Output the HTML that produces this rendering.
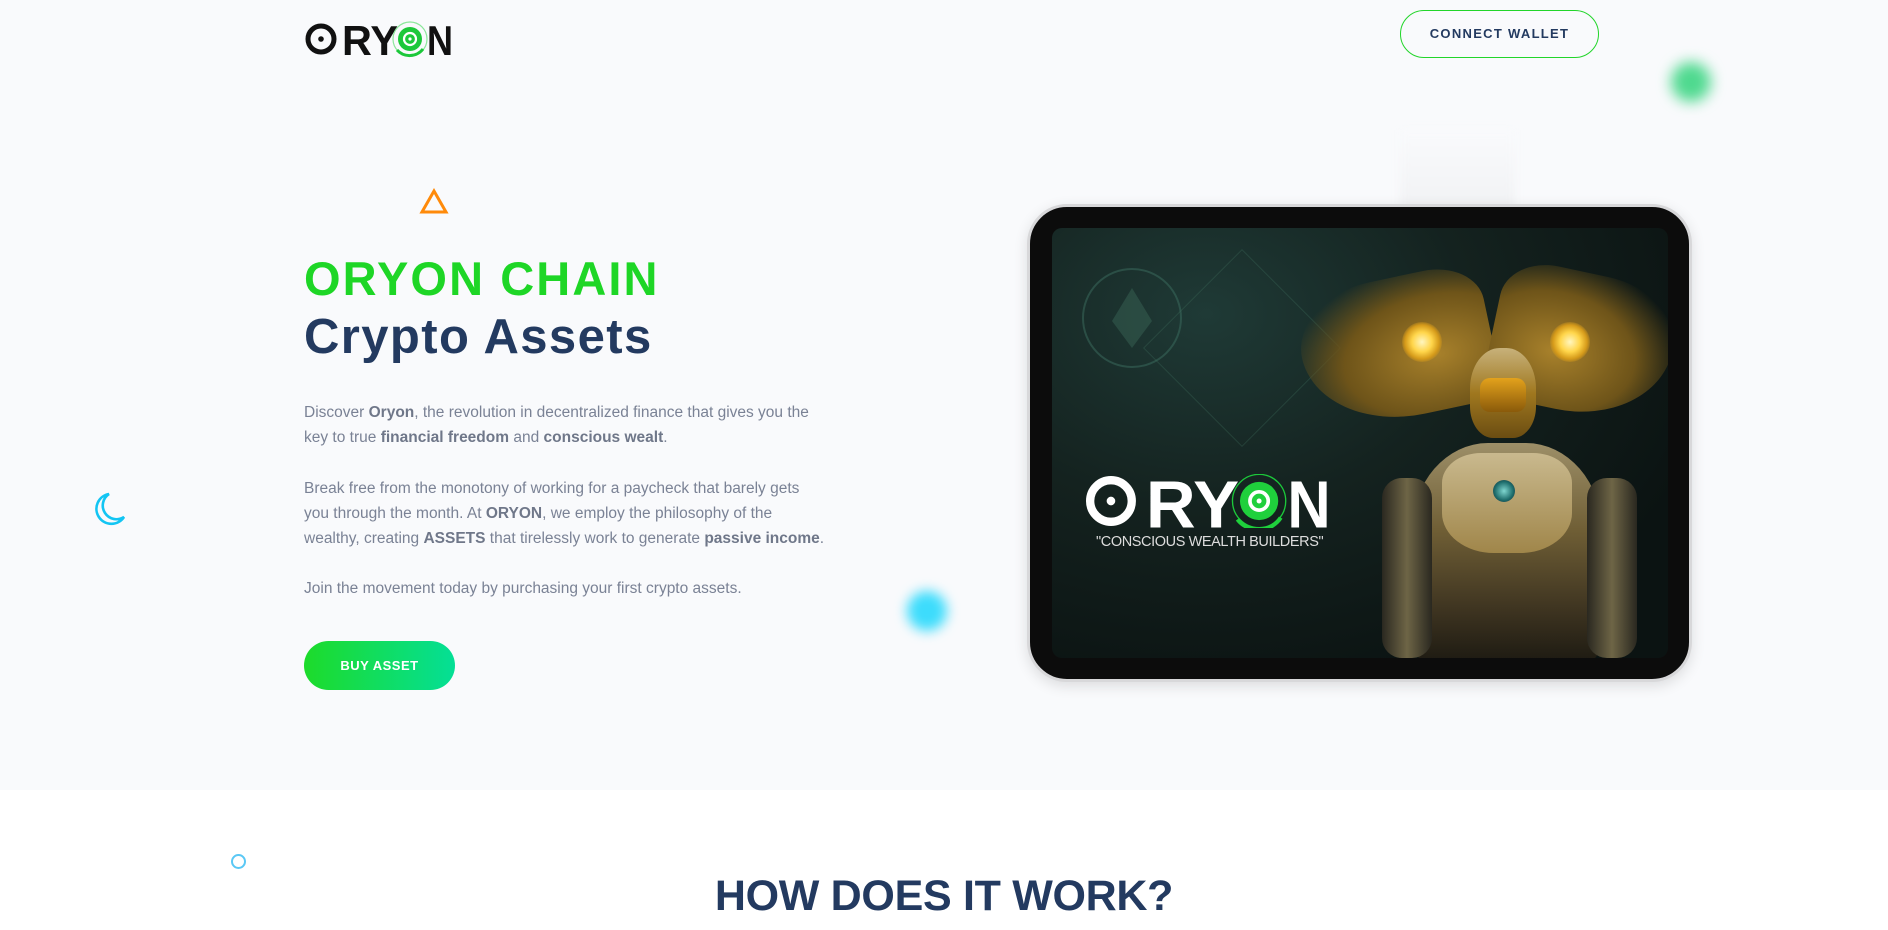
<!DOCTYPE html>
<html><head><meta charset="utf-8"><style>
*{margin:0;padding:0;box-sizing:border-box}
body{width:1888px;height:930px;overflow:hidden;background:#fff;font-family:"Liberation Sans",sans-serif;position:relative}
.hero{position:absolute;left:0;top:0;width:1888px;height:790px;background:#f9fafc}
.abs{position:absolute}
.btnw{left:1400px;top:10px;width:199px;height:48px;border:1.5px solid #22d52a;border-radius:24px;text-align:center;line-height:45px;font-size:13px;font-weight:700;letter-spacing:1.3px;color:#233a60}
h1{position:absolute;left:304px;top:250px;font-size:47px;line-height:58px;font-weight:700;color:#1ed626;white-space:nowrap;letter-spacing:2.1px}
h1 span{color:#233a60;font-size:49px;letter-spacing:1.4px}
.p{position:absolute;left:304px;font-size:15.5px;color:#7a8295;line-height:25px;white-space:nowrap}
.p b{color:#6f7789}
.buy{left:304px;top:641px;width:151px;height:49px;border-radius:25px;background:linear-gradient(90deg,#1ddb2a,#04df96);color:#fff;font-weight:700;font-size:13px;text-align:center;line-height:49px;letter-spacing:.5px}
h2{position:absolute;left:0;width:1888px;text-align:center;top:872px;font-size:43px;font-weight:700;color:#233a60;letter-spacing:-.3px}
</style></head><body>
<div class="hero"></div>

<svg class="abs" style="left:303px;top:19px" width="152" height="40" viewBox="-2 0 152 40">
<circle cx="16" cy="20" r="13" fill="none" stroke="#111" stroke-width="5"/><circle cx="16" cy="20" r="2.8" fill="#111"/>
<text x="37" y="36" font-family="Liberation Sans" font-weight="700" font-size="42" textLength="56" lengthAdjust="spacingAndGlyphs" fill="#111">RY</text>
<circle cx="105" cy="20" r="17" fill="none" stroke="#8be79a" stroke-width="1.2"/>
<circle cx="105" cy="20" r="12" fill="#1cc83a"/><circle cx="105" cy="20" r="6" fill="none" stroke="#fff" stroke-width="2.2"/><circle cx="105" cy="20" r="1.6" fill="#fff"/>
<path d="M92 31 A17 17 0 0 0 118 30" fill="none" stroke="#1cc83a" stroke-width="3"/>
<text x="122" y="36" font-family="Liberation Sans" font-weight="700" font-size="42" textLength="26" lengthAdjust="spacingAndGlyphs" fill="#111">N</text>
</svg>

<div class="abs btnw">CONNECT WALLET</div>
<div class="abs" style="left:1671px;top:62px;width:40px;height:40px;border-radius:50%;background:#4fd98f;filter:blur(7px)"></div>

<svg class="abs" style="left:419px;top:188px" width="30" height="27" viewBox="0 0 30 27"><path d="M15 3 L27 24 L3 24 Z" fill="none" stroke="#ff8a0a" stroke-width="3"/></svg>
<svg class="abs" style="left:94px;top:491px" width="34" height="36" viewBox="0 0 34 36"><path d="M15 3 A15 15 0 1 0 30 26 A12 12 0 0 1 15 3 Z" fill="none" stroke="#13c5f3" stroke-width="2.6"/></svg>
<div class="abs" style="left:907px;top:591px;width:40px;height:40px;border-radius:50%;background:#3ddcfc;filter:blur(6px)"></div>
<div class="abs" style="left:231px;top:854px;width:15px;height:15px;border-radius:50%;border:2px solid #5ac8f5"></div>

<h1>ORYON CHAIN<br><span>Crypto Assets</span></h1>
<div class="p" style="top:400px">Discover <b>Oryon</b>, the revolution in decentralized finance that gives you the<br>key to true <b>financial freedom</b> and <b>conscious wealt</b>.</div>
<div class="p" style="top:476px">Break free from the monotony of working for a paycheck that barely gets<br>you through the month. At <b>ORYON</b>, we employ the philosophy of the<br>wealthy, creating <b>ASSETS</b> that tirelessly work to generate <b>passive income</b>.</div>
<div class="p" style="top:576px">Join the movement today by purchasing your first crypto assets.</div>
<div class="abs buy">BUY ASSET</div>

<div class="abs" style="left:1400px;top:130px;width:115px;height:80px;background:linear-gradient(180deg,#f9fafc,#f1f2f4);filter:blur(4px)"></div>
<div class="abs" style="left:1027px;top:204px;width:665px;height:478px;border-radius:40px;background:#0c0c0c;border:3px solid #d8d8da;box-shadow:0 4px 14px rgba(0,0,0,.12)"></div>
<div class="abs" style="left:1052px;top:228px;width:616px;height:430px;border-radius:10px;overflow:hidden;background:radial-gradient(ellipse at 25% 20%,#1f3a36 0%,#14221f 40%,#0b1312 80%);">
  <div class="abs" style="left:30px;top:40px;width:100px;height:100px;border-radius:50%;border:2px solid rgba(60,110,95,.5)"></div>
  <div class="abs" style="left:60px;top:60px;width:40px;height:60px;background:rgba(70,120,100,.35);clip-path:polygon(50% 0,100% 55%,50% 100%,0 55%)"></div>
  <div class="abs" style="left:120px;top:50px;width:140px;height:140px;border:1px solid rgba(70,120,100,.3);transform:rotate(45deg)"></div>
  <div class="abs" style="left:250px;top:50px;width:190px;height:140px;border-radius:60% 40% 20% 80%;background:radial-gradient(ellipse at 70% 60%,#a8812b,#6e5419 50%,rgba(40,35,15,0) 80%);transform:rotate(-12deg)"></div>
  <div class="abs" style="left:440px;top:45px;width:180px;height:140px;border-radius:40% 60% 80% 20%;background:radial-gradient(ellipse at 35% 60%,#a8812b,#6e5419 50%,rgba(40,35,15,0) 80%);transform:rotate(12deg)"></div>
  <div class="abs" style="left:350px;top:94px;width:40px;height:40px;border-radius:50%;background:radial-gradient(circle,#fff6c0 0,#ffd54a 35%,#d59a1a 60%,rgba(200,140,20,0) 75%)"></div>
  <div class="abs" style="left:498px;top:94px;width:40px;height:40px;border-radius:50%;background:radial-gradient(circle,#fff6c0 0,#ffd54a 35%,#d59a1a 60%,rgba(200,140,20,0) 75%)"></div>
  <div class="abs" style="left:418px;top:120px;width:66px;height:90px;border-radius:45% 45% 35% 35%;background:linear-gradient(180deg,#c7b17a,#a0781f 50%,#6b4d12)"></div>
  <div class="abs" style="left:428px;top:150px;width:46px;height:34px;border-radius:10px;background:linear-gradient(180deg,#e3a21c,#8a5a0a)"></div>
  <div class="abs" style="left:360px;top:215px;width:190px;height:220px;border-radius:40% 40% 10% 10%;background:linear-gradient(180deg,#9d8f68,#6f5e35 40%,#3f3521 75%,#1d1a12)"></div>
  <div class="abs" style="left:390px;top:225px;width:130px;height:100px;border-radius:30% 30% 40% 40%;background:linear-gradient(180deg,#c9b98e,#a0864a)"></div>
  <div class="abs" style="left:441px;top:252px;width:22px;height:22px;border-radius:50%;background:radial-gradient(circle,#7fd6d0,#1c6b6a 60%,#223)"></div>
  <div class="abs" style="left:330px;top:250px;width:50px;height:180px;border-radius:20px;background:linear-gradient(90deg,#2a2820,#6e6546,#2a2820)"></div>
  <div class="abs" style="left:535px;top:250px;width:50px;height:180px;border-radius:20px;background:linear-gradient(90deg,#2a2820,#6e6546,#2a2820)"></div>
  <svg class="abs" style="left:29px;top:246px" width="253" height="54" viewBox="-2 0 152 32">
  <circle cx="16" cy="16" r="12.5" fill="none" stroke="#fff" stroke-width="5"/><circle cx="16" cy="16" r="2.6" fill="#fff"/>
  <text x="37" y="32" font-family="Liberation Sans" font-weight="700" font-size="40" textLength="56" lengthAdjust="spacingAndGlyphs" fill="#fff">RY</text>
  <circle cx="105" cy="16" r="16" fill="none" stroke="#1cc83a" stroke-width="0.8"/>
  <circle cx="105" cy="16" r="11.5" fill="#1fd03c"/><circle cx="105" cy="16" r="5.5" fill="none" stroke="#fff" stroke-width="2.2"/><circle cx="105" cy="16" r="1.5" fill="#fff"/>
  <path d="M92 27 A16 16 0 0 0 118 26" fill="none" stroke="#1fd03c" stroke-width="2.5"/>
  <text x="122" y="32" font-family="Liberation Sans" font-weight="700" font-size="40" textLength="26" lengthAdjust="spacingAndGlyphs" fill="#fff">N</text>
  </svg>
  <div class="abs" style="left:44px;top:306px;width:226px;font-size:14.5px;color:#ddd;white-space:nowrap;letter-spacing:-.4px">"CONSCIOUS WEALTH BUILDERS"</div>
</div>

<h2>HOW DOES IT WORK?</h2>
</body></html>
